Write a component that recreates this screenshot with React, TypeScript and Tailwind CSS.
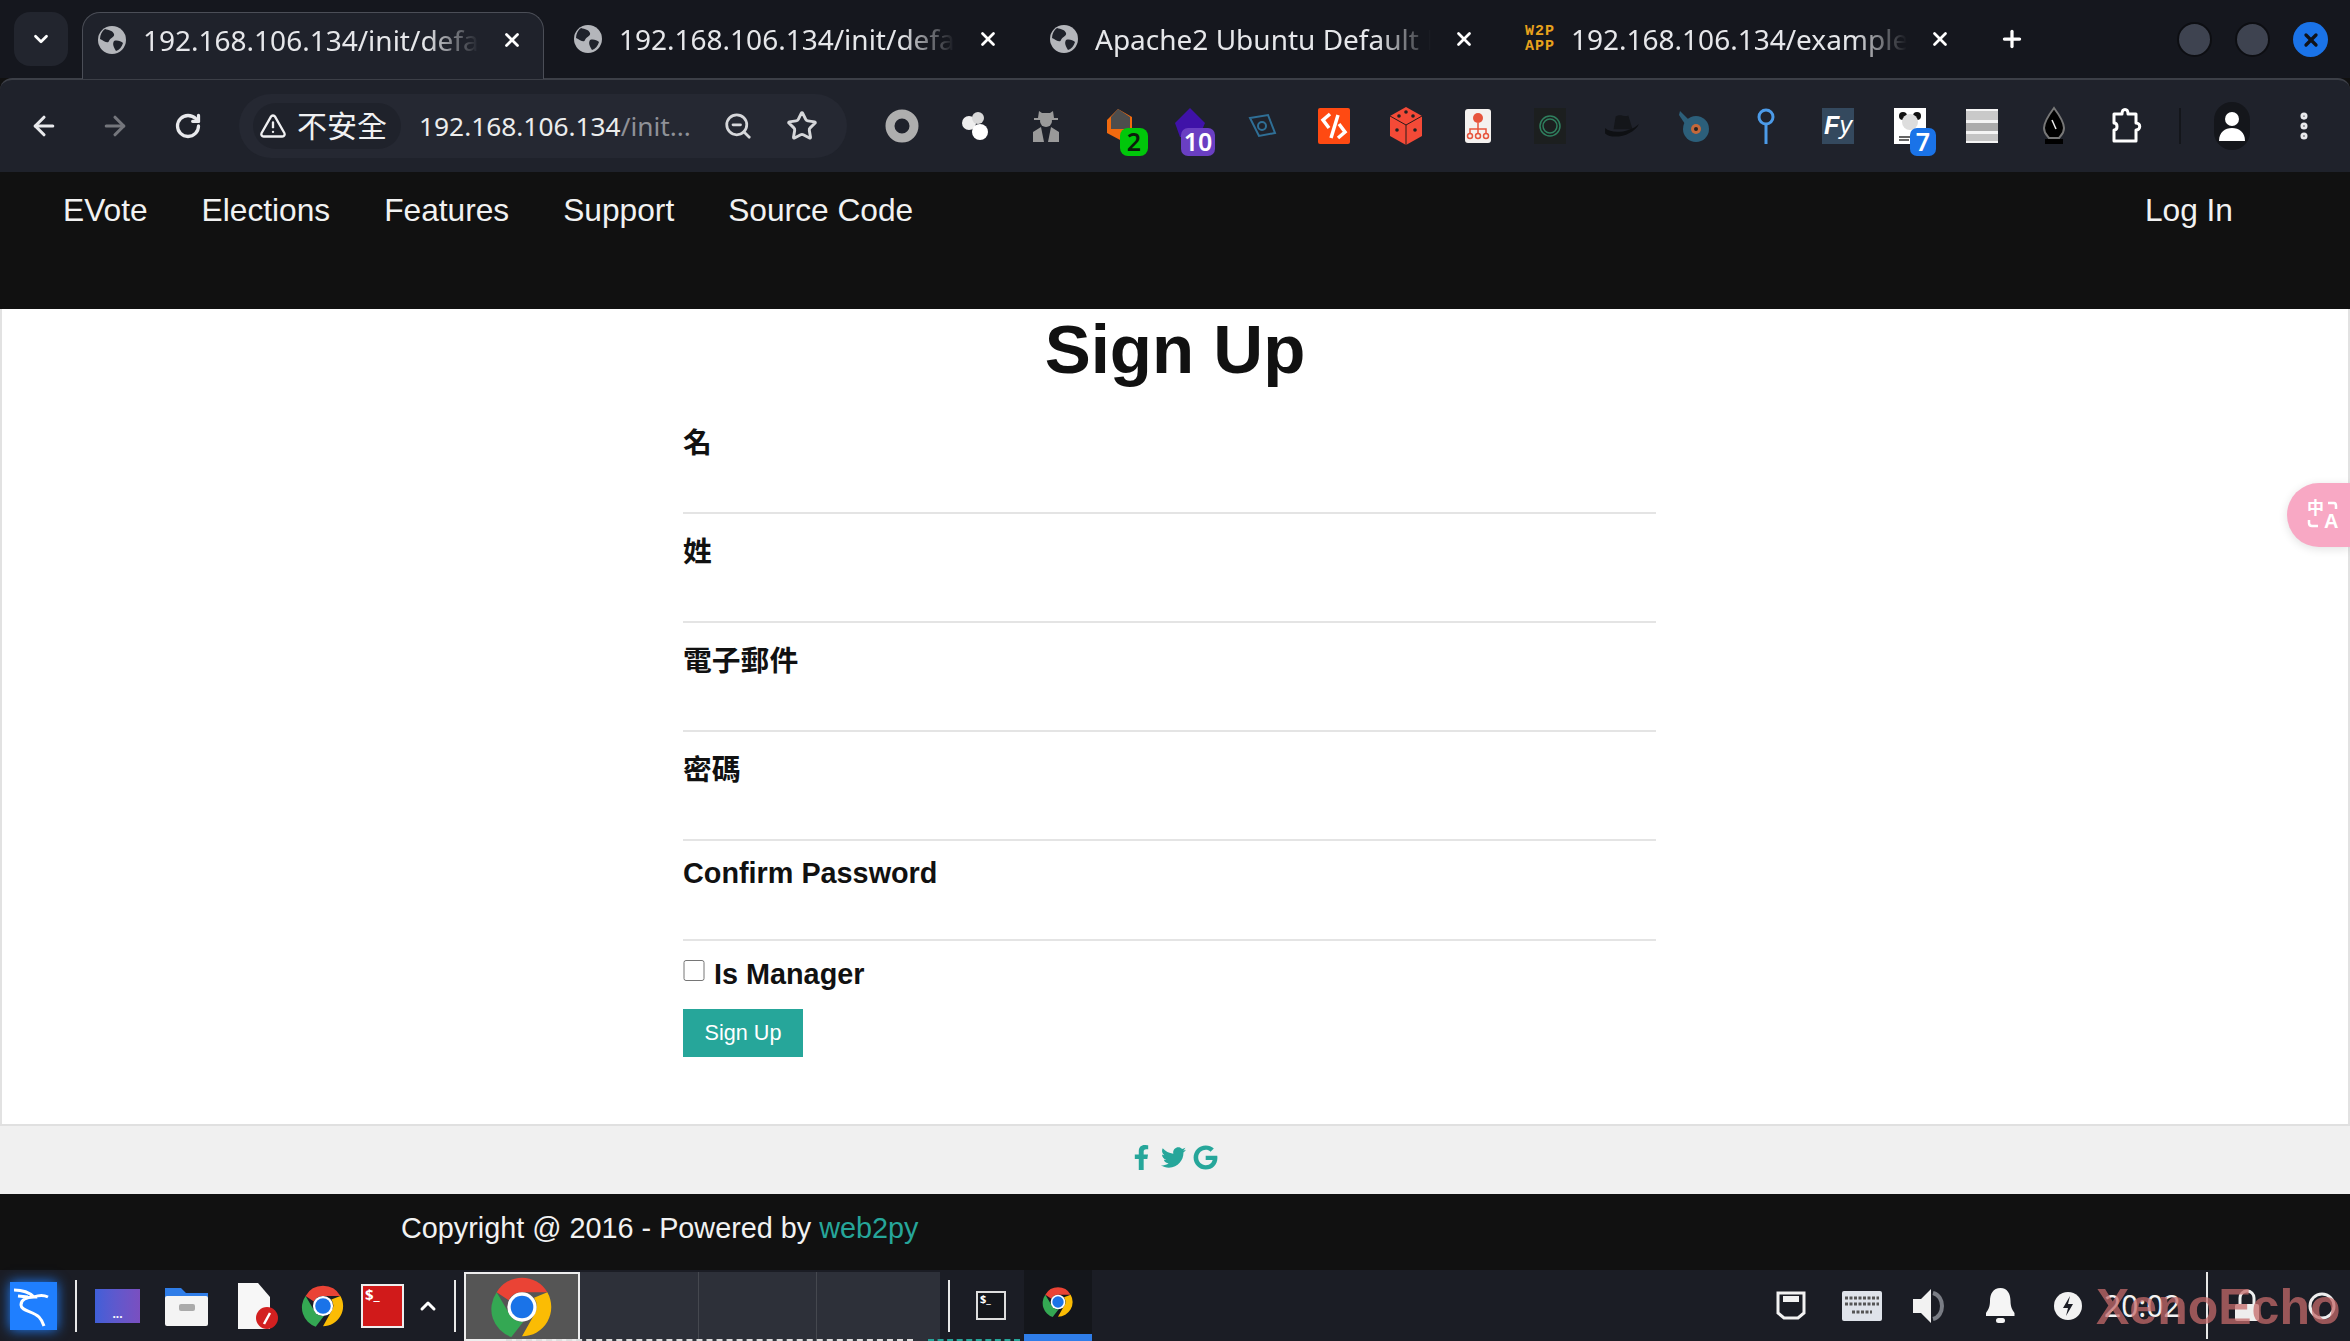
import type { ReactNode } from "react";
import {
  ArrowLeft,
  ArrowRight,
  ChevronDown,
  ChevronUp,
  EllipsisVertical,
  Plus,
  RotateCw,
  Star,
  TriangleAlert,
  X,
  ZoomOut,
} from "lucide-react";
import { FaFacebookF, FaGoogle, FaTwitter } from "react-icons/fa";

const uiFont = "font-['Noto_Sans','Noto_Sans_CJK_TC',sans-serif]";

const tabs = [
  { title: "192.168.106.134/init/default/user/register", icon: "globe" },
  { title: "192.168.106.134/init/default/index", icon: "globe" },
  { title: "Apache2 Ubuntu Default Page", icon: "globe" },
  { title: "192.168.106.134/examples/index", icon: "w2p" },
];

function GlobeIcon() {
  return (
    <svg width="30" height="30" viewBox="0 0 30 30">
      <circle cx="15" cy="15" r="14" fill="#b4b6bb" />
      <path d="M8 4c4 1 8 2 9 5s-4 4-5 7-5 0-9-2c0-4 2-8 5-10Z" fill="#1f222b" />
      <path d="M17 16c3-1 7 0 9 2-1 4-4 7-7 8-2-3-4-7-2-10Z" fill="#1f222b" />
    </svg>
  );
}

function W2pIcon() {
  return (
    <div className="w-[30px] font-['Liberation_Mono',monospace] text-[15px] leading-[15px] font-bold tracking-[1px] text-[#e8a21c]">
      <div>W2P</div>
      <div>APP</div>
    </div>
  );
}

function ChromeIcon({ size }: { size: number }) {
  return (
    <svg width={size} height={size} viewBox="0 0 48 48">
      <path d="M24 2a22 22 0 0 1 19 11H24a11 11 0 0 0-10 6L5 13A22 22 0 0 1 24 2Z" fill="#ea4335" />
      <path d="M5 13l10 17a11 11 0 0 0 10 5l-9 11.500A22 22 0 0 1 5 13Z" fill="#34a853" />
      <path d="M43 13a22 22 0 0 1-19 33l9-16a11 11 0 0 0 0-13l10-4Z" fill="#fbbc04" />
      <circle cx="24" cy="24" r="11" fill="#fff" />
      <circle cx="24" cy="24" r="8.500" fill="#1a73e8" />
    </svg>
  );
}

const extensions: ReactNode[] = [
  <svg key="ring" width="34" height="34" viewBox="0 0 34 34">
    <circle cx="17" cy="17" r="12" fill="none" stroke="#aeaeae" strokeWidth="9" />
  </svg>,
  <svg key="blobs" width="34" height="34" viewBox="0 0 34 34">
    <circle cx="12" cy="14" r="7" fill="#eee" />
    <circle cx="21" cy="9" r="6" fill="#d8d8d8" />
    <circle cx="23" cy="23" r="8" fill="#fff" />
  </svg>,
  <svg key="spy" width="30" height="36" viewBox="0 0 30 36">
    <path d="M8 3l3 2h8l3-2 1 7h4v2H3v-2h4Z" fill="#9a9a9a" />
    <circle cx="15" cy="13" r="6" fill="#9a9a9a" />
    <path d="M2 34V24l8-5 3 15Zm26 0V24l-8-5-3 15Z" fill="#9a9a9a" />
  </svg>,
  <div key="hex" className="relative flex h-[36px] w-[36px] items-center justify-center">
    <svg width="30" height="36" viewBox="0 0 30 36">
      <path d="M15 1l14 8v14l-10 10-15-8V12Z" fill="#f06a0f" />
      <path d="M15 1l12 8v12H8V9Z" fill="#4d4d4d" />
    </svg>
    <span className={`absolute top-[20px] left-[20px] flex h-[28px] w-[28px] items-center justify-center rounded-[8px] bg-[#00c70a] text-[25px] font-semibold text-[#0b1d0b] ${uiFont}`}>
      2
    </span>
  </div>,
  <div key="purple" className="relative flex h-[36px] w-[36px] items-center justify-center">
    <svg width="32" height="36" viewBox="0 0 32 36">
      <path d="M16 0l15 15-6 14H6L1 15Z" fill="#3f12a8" />
    </svg>
    <span className={`absolute top-[20px] left-[9px] flex h-[28px] w-[34px] items-center justify-center rounded-[7px] bg-[#6a3fc2] text-[25px] font-semibold text-white ${uiFont}`}>
      10
    </span>
  </div>,
  <svg key="eye" width="30" height="26" viewBox="0 0 30 26">
    <path d="M3 5l18-3 7 18-16 3Z" fill="none" stroke="#2f6f96" strokeWidth="2" />
    <circle cx="15" cy="13" r="4" fill="none" stroke="#2f6f96" strokeWidth="2" />
  </svg>,
  <svg key="code" width="32" height="36" viewBox="0 0 32 36">
    <rect width="32" height="36" rx="2" fill="#ff4a12" />
    <path d="M12 6l-7 6 6 8M20 7l-7 23M21 16l6 8-7 6" fill="none" stroke="#fff" strokeWidth="3.500" />
  </svg>,
  <svg key="die" width="32" height="38" viewBox="0 0 32 38">
    <path d="M16 0l16 9v20l-16 9L0 29V9Z" fill="#f44a37" />
    <path d="M0 9l16 9 16-9M16 18v20" fill="none" stroke="#2a1a1a" strokeWidth="1" />
    <circle cx="16" cy="5" r="1.800" fill="#222" />
    <circle cx="9" cy="9" r="1.800" fill="#222" />
    <circle cx="23" cy="9" r="1.800" fill="#222" />
    <circle cx="7" cy="23" r="1.800" fill="#222" />
    <circle cx="25" cy="23" r="1.800" fill="#222" />
  </svg>,
  <svg key="org" width="26" height="34" viewBox="0 0 26 34">
    <rect width="26" height="34" rx="3" fill="#f4f1ef" />
    <circle cx="13" cy="9" r="5" fill="#e7543c" />
    <path d="M13 14v6M5 25v-5h16v5M13 20v5" fill="none" stroke="#e7543c" strokeWidth="1.500" />
    <circle cx="5" cy="27" r="2.500" fill="none" stroke="#e7543c" strokeWidth="1.500" />
    <circle cx="13" cy="27" r="2.500" fill="none" stroke="#e7543c" strokeWidth="1.500" />
    <circle cx="21" cy="27" r="2.500" fill="none" stroke="#e7543c" strokeWidth="1.500" />
  </svg>,
  <svg key="rings" width="32" height="36" viewBox="0 0 32 36">
    <rect width="32" height="36" fill="#1c1f1f" />
    <circle cx="16" cy="18" r="10" fill="none" stroke="#2f7f5e" strokeWidth="1.500" />
    <circle cx="16" cy="18" r="7" fill="none" stroke="#2f7f5e" strokeWidth="1.500" />
  </svg>,
  <svg key="hat" width="38" height="30" viewBox="0 0 36 26">
    <path d="M10 16l2-12c5-3 8 1 12-1l4 13Z" fill="#14161a" />
    <path d="M2 15c6 6 24 4 32-4-4 10-24 16-32 9Z" fill="#0e1013" />
  </svg>,
  <svg key="pan" width="32" height="34" viewBox="0 0 32 34">
    <path d="M2 2l12 12-5 4L1 6Z" fill="#2c5f7a" />
    <circle cx="18" cy="20" r="13" fill="#2c5f7a" />
    <circle cx="18" cy="20" r="5" fill="#c4683a" />
    <circle cx="18" cy="20" r="2" fill="#222" />
  </svg>,
  <svg key="pin" width="18" height="38" viewBox="0 0 18 38">
    <circle cx="9" cy="10" r="7" fill="none" stroke="#4c9be8" strokeWidth="3" />
    <path d="M9 17v20" stroke="#4c9be8" strokeWidth="3" />
  </svg>,
  <div key="fy" className="flex h-[36px] w-[32px] items-center justify-center bg-[#34495e] font-['Liberation_Sans',sans-serif] text-[25px] text-white italic">
    <span className="font-bold">F</span>y
  </div>,
  <div key="panda" className="relative flex h-[36px] w-[32px] items-center justify-center">
    <svg width="32" height="36" viewBox="0 0 32 36">
      <rect width="32" height="36" fill="#fff" />
      <circle cx="9" cy="8" r="4" fill="#111" />
      <circle cx="23" cy="8" r="4" fill="#111" />
      <circle cx="16" cy="14" r="8" fill="#ddd" />
      <path d="M5 29h14M5 32h10" stroke="#333" strokeWidth="1.500" />
    </svg>
    <span className={`absolute top-[20px] left-[16px] flex h-[28px] w-[26px] items-center justify-center rounded-[7px] bg-[#1a73e8] text-[25px] font-semibold text-white ${uiFont}`}>
      7
    </span>
  </div>,
  <div key="stripes" className="flex h-[34px] w-[32px] flex-col bg-[#f4f4f4] py-[2px]">
    <div className="h-[9px] bg-[#c9c9c9]" />
    <div className="h-[3px]" />
    <div className="h-[8px] bg-[#ababab]" />
    <div className="h-[3px]" />
    <div className="h-[7px] bg-[#c4c4c4]" />
  </div>,
  <svg key="bishop" width="32" height="40" viewBox="0 0 32 40">
    <path d="M16 2c6 8 10 14 10 20 0 6-4 8-5 10H11c-1-2-5-4-5-10 0-6 4-12 10-20Z" fill="#000" stroke="#777" strokeWidth="2" />
    <path d="M14 14l4 9" stroke="#eee" strokeWidth="1.500" />
    <rect x="7" y="33" width="18" height="5" fill="#000" />
  </svg>,
  <svg key="puzzle" width="32" height="38" viewBox="0 0 32 38">
    <path
      d="M4 7h8c0-6 6-6 6 0h8v9c5 0 5 7 0 7v11H4V23c4 0 4-7 0-7Z"
      fill="none"
      stroke="#fff"
      strokeWidth="3"
      strokeLinejoin="round"
    />
  </svg>,
];

function TabStrip() {
  return (
    <div className={`flex h-[78px] bg-[#15171e] ${uiFont}`}>
      <div className="ml-[14px] mt-[12px] flex h-[54px] w-[54px] items-center justify-center rounded-[16px] bg-[#22252e] text-white">
        <ChevronDown size={22} strokeWidth={3} />
      </div>
      <div className="ml-[14px] flex">
        {tabs.map((tab, index) => (
          <div
            key={tab.title}
            className={
              index === 0
                ? "mt-[12px] flex h-[67px] w-[462px] items-center rounded-t-[18px] border border-b-0 border-[#4b4e57] bg-[#1f222b] pl-[14px] pb-[12px]"
                : "mt-[12px] flex h-[66px] w-[476px] items-center pl-[29px] pb-[12px]"
            }
          >
            <div className="flex w-[30px] shrink-0 justify-center">
              {tab.icon === "w2p" ? <W2pIcon /> : <GlobeIcon />}
            </div>
            <div className="ml-[16px] w-[336px] overflow-hidden text-[28px] leading-[36px] whitespace-nowrap text-[#e6e7ea] [mask-image:linear-gradient(to_right,#000_84%,transparent)]">
              {tab.title}
            </div>
            <X size={22} strokeWidth={3} className="ml-[22px] shrink-0 text-white" />
          </div>
        ))}
      </div>
      <Plus size={26} strokeWidth={3} className="mt-[26px] ml-[27px] text-white" />
      <div className="ml-auto mt-[22px] mr-[22px] flex gap-[23px]">
        <div className="h-[35px] w-[35px] rounded-full border-2 border-[#0d0e12] bg-[#3e4350]" />
        <div className="h-[35px] w-[35px] rounded-full border-2 border-[#0d0e12] bg-[#3e4350]" />
        <div className="flex h-[35px] w-[35px] items-center justify-center rounded-full bg-[#1a73e8] text-[#10131a]">
          <X size={20} strokeWidth={4} />
        </div>
      </div>
    </div>
  );
}

function Toolbar() {
  return (
    <div className={`flex h-[94px] items-center rounded-t-[12px] border-t-2 border-[#3c3f47] bg-[#1f222b] ${uiFont}`}>
      <ArrowLeft size={30} strokeWidth={2.500} className="ml-[29px] text-[#e8e9ec]" />
      <ArrowRight size={30} strokeWidth={2.500} className="ml-[41px] text-[#74767c]" />
      <RotateCw size={28} strokeWidth={2.800} className="ml-[44px] text-[#e8e9ec]" />
      <div className="ml-[37px] flex h-[64px] w-[608px] items-center rounded-full bg-[#252832]">
        <div className="ml-[14px] flex h-[46px] w-[148px] items-center rounded-full bg-[#1f222b] pl-[6px] text-[#f0f0f2]">
          <TriangleAlert size={28} strokeWidth={2} />
          <span className="ml-[10px] text-[30px] leading-[36px]">不安全</span>
        </div>
        <div className="ml-[18px] w-[278px] overflow-hidden text-[26.300px] leading-[36px] whitespace-nowrap text-[#eceded]">
          192.168.106.134<span className="text-[#8f9197]">/init...</span>
        </div>
        <ZoomOut size={30} strokeWidth={2.200} className="ml-[26px] text-[#d6d7da]" />
        <Star size={32} strokeWidth={2.200} className="ml-[33px] text-[#d6d7da]" />
      </div>
      <div className="ml-[19px] flex">
        {extensions.map((icon, index) => (
          <div key={index} className="flex h-[72px] w-[72px] items-center justify-center">
            {icon}
          </div>
        ))}
      </div>
      <div className="ml-[17px] h-[36px] w-[2px] bg-[#14161b]" />
      <div className="ml-[33px] flex h-[48px] w-[36px] items-center justify-center rounded-full bg-[#14161b]">
        <svg width="28" height="30" viewBox="0 0 28 30">
          <circle cx="14" cy="8" r="7" fill="#fff" />
          <path d="M1 30c0-9 6-13 13-13s13 4 13 13Z" fill="#fff" />
        </svg>
      </div>
      <EllipsisVertical size={34} strokeWidth={3} className="ml-[37px] text-[#e8e9ec]" />
    </div>
  );
}

function SiteNav() {
  const links = ["EVote", "Elections", "Features", "Support", "Source Code"];
  return (
    <nav className="flex h-[137px] items-start bg-[#111] pt-[18px] pr-[117px] pl-[63px] text-[31.700px] leading-[40px] text-[#f2f2f2]">
      <div className="flex gap-[54px]">
        {links.map((link) => (
          <a key={link}>{link}</a>
        ))}
      </div>
      <a className="ml-auto">Log In</a>
    </nav>
  );
}

const fields = [
  { label: "名", last: false },
  { label: "姓", last: false },
  { label: "電子郵件", last: false },
  { label: "密碼", last: false },
  { label: "Confirm Password", last: true },
];

function SignUpForm() {
  return (
    <main className="h-[815px] border-x-2 border-[#e2e2e2] bg-white text-[#111]">
      <h1 className="h-[83px] text-center text-[69px] leading-[81px] font-bold">Sign Up</h1>
      <form className="mt-[31px] ml-[681px] w-[973px]">
        {fields.map((field) => (
          <div key={field.label} className={field.last ? "mt-[-6px]" : "mb-[18px]"}>
            <label className="block h-[40px] text-[28.800px] leading-[40px] font-bold">{field.label}</label>
            <input
              className={`block w-full border-b-2 border-[#e4e4e4] outline-none ${field.last ? "h-[48px]" : "h-[51px]"}`}
            />
          </div>
        ))}
        <div className="mt-[13px] flex h-[40px] items-center">
          <input type="checkbox" className="mb-[7px] h-[21px] w-[22px]" />
          <label className="ml-[9px] text-[28.800px] leading-[40px] font-bold">Is Manager</label>
        </div>
        <button
          type="button"
          className="mt-[15px] h-[48px] w-[120px] bg-[#26a69a] text-[21.600px] text-white"
        >
          Sign Up
        </button>
      </form>
    </main>
  );
}

function PageFooter() {
  return (
    <>
      <div className="flex h-[70px] items-center justify-center border-t-2 border-[#e0e0e0] bg-[#f0f0f0] pr-[4px] pb-[5px] text-[25px] text-[#26a69a]">
        <FaFacebookF className="mr-[7px]" />
        <FaTwitter className="mr-[7px]" />
        <FaGoogle />
      </div>
      <div className="flex h-[76px] items-center bg-[#111] pb-[7px] pl-[401px] text-[28.800px] text-[#f2f2f2]">
        <span className="whitespace-pre">Copyright @ 2016 - Powered by </span>
        <a className="text-[#26a69a]">web2py</a>
      </div>
    </>
  );
}

function TaskSep({ className }: { className: string }) {
  return <div className={`h-[52px] w-[2px] shrink-0 bg-[#e8e8e8] ${className}`} />;
}

function Taskbar() {
  return (
    <div className={`relative flex h-[71px] items-center bg-[#1b1d25] ${uiFont}`}>
      {/* launcher */}
      <div className="ml-[10px] flex h-[48px] w-[47px] items-center justify-center bg-[#1f7fff] shadow-[0_0_12px_#1f7fff]">
        <svg width="44" height="44" viewBox="0 0 44 44">
          <path
            d="M2 6c8 0 16 3 20 7-8 0-13 3-13 8 0 6 12 6 18 12 3 3 4 6 5 9M6 12l10 1M22 13c5-2 10-2 14 0"
            fill="none"
            stroke="#fff"
            strokeWidth="3"
          />
        </svg>
      </div>
      <TaskSep className="ml-[18px]" />
      <div className="ml-[18px] flex h-[34px] w-[45px] items-end justify-center bg-gradient-to-r from-[#3f5fd8] to-[#7a4fc0] pb-[3px]">
        <span className="text-[12px] leading-[12px] font-bold text-white">...</span>
      </div>
      <svg className="ml-[25px]" width="43" height="40" viewBox="0 0 43 40">
        <path d="M0 2h16l5 5h22v8H0Z" fill="#2f7de8" />
        <rect y="10" width="43" height="30" rx="2" fill="#f4f4f4" />
        <rect x="14" y="18" width="16" height="7" rx="2" fill="#aaa" />
      </svg>
      <svg className="ml-[30px]" width="40" height="46" viewBox="0 0 40 46">
        <path d="M0 0h20l12 14v32H0Z" fill="#f7f7f7" />
        <circle cx="29" cy="35" r="11" fill="#d32020" />
        <path d="M26 41l6-11" stroke="#fff" strokeWidth="2.500" />
      </svg>
      <div className="ml-[23px]">
        <ChromeIcon size={44} />
      </div>
      <div className="ml-[16px] flex h-[44px] w-[43px] border-2 border-[#eee] bg-[#d11a1a] pl-[2px] text-[15px] leading-[16px] font-bold text-white">
        $_
      </div>
      <ChevronUp size={24} strokeWidth={3} className="ml-[12px] text-white" />
      <TaskSep className="ml-[14px]" />
      <div className="ml-[8px] flex h-[69px] w-[116px] items-center justify-center self-end border-2 border-[#eee] bg-[#555]">
        <ChromeIcon size={64} />
      </div>
      <div className="flex h-[69px] self-end bg-[#2d3039]">
        <div className="w-[119px] border-r border-[#45484f]" />
        <div className="w-[118px] border-r border-[#45484f]" />
        <div className="w-[123px]" />
      </div>
      <TaskSep className="ml-[8px]" />
      <div className="ml-[26px] flex h-[29px] w-[30px] border-2 border-[#ddd] bg-[#14161b] pl-[2px] text-[11px] leading-[12px] font-bold text-white">
        $_
      </div>
      <div className="ml-[18px] flex h-[71px] w-[68px] items-center justify-center border-b-[7px] border-[#2f7de8] bg-[#14161b]">
        <ChromeIcon size={32} />
      </div>
      {/* tray */}
      <svg className="ml-[684px]" width="30" height="30" viewBox="0 0 30 30">
        <path d="M2 2h26v20l-6 5H8l-6-5Z" fill="none" stroke="#f2f2f2" strokeWidth="3" />
        <path d="M7 5h16v6H7Z" fill="#f2f2f2" />
      </svg>
      <svg className="ml-[36px]" width="40" height="30" viewBox="0 0 40 30">
        <rect width="40" height="30" rx="2" fill="#dfe3ea" />
        <path d="M3 7h34M3 13h34M10 21h20" stroke="#555" strokeWidth="3" strokeDasharray="3 1.500" />
      </svg>
      <svg className="ml-[31px]" width="35" height="36" viewBox="0 0 35 36">
        <path d="M0 11h8L18 1v34L8 25H0Z" fill="#f2f2f2" />
        <path d="M20 5c12 3 12 23 0 26" fill="none" stroke="#7a7d85" strokeWidth="4" />
      </svg>
      <svg className="ml-[38px]" width="29" height="38" viewBox="0 0 29 38">
        <path d="M14.500 1c7 0 10 6 10 13 0 6 2 9 4 12v3H0v-3c2-3 4-6 4-12C4 7 7 1 14.500 1Z" fill="#f5f5f5" />
        <rect x="10" y="31" width="9" height="5" rx="2.500" fill="#f5f5f5" />
      </svg>
      <svg className="ml-[39px]" width="28" height="28" viewBox="0 0 28 28">
        <circle cx="14" cy="14" r="14" fill="#f2f2f2" />
        <path d="M16 4l-7 12h5l-2 8 7-12h-5Z" fill="#1b1d25" />
      </svg>
      <span className="ml-[22px] w-[73px] text-[30px] leading-[36px] text-[#f2f2f2]">20:02</span>
      <div className="ml-[29px] h-[67px] w-[2px] bg-[#e8e8e8]" />
      <svg className="ml-[27px]" width="24" height="34" viewBox="0 0 24 34">
        <path d="M5 15V9a7 7 0 0 1 14 0v6" fill="none" stroke="#eee" strokeWidth="3" />
        <rect y="15" width="24" height="17" rx="2" fill="#eee" />
      </svg>
      <svg className="ml-[49px]" width="28" height="28" viewBox="0 0 28 28">
        <circle cx="14" cy="14" r="12" fill="none" stroke="#eee" strokeWidth="3" />
      </svg>
      <span className="absolute top-[17px] left-[2096px] font-['Liberation_Sans',sans-serif] text-[50px] leading-[40px] font-bold text-[#c46a6a]/75">
        XenoEcho
      </span>
      {/* sliver of the window behind, peeking under the previews */}
      <div className="absolute bottom-0 left-[506px] w-[407px] border-t-[2px] border-dashed border-[#ddd]" />
      <div className="absolute bottom-0 left-[928px] w-[92px] border-t-[2px] border-dashed border-[#26a69a]" />
    </div>
  );
}

export default function App() {
  return (
    <div className="relative h-[1341px] w-[2350px] overflow-hidden bg-[#111] font-['Liberation_Sans','Noto_Sans_CJK_TC',sans-serif]">
      <TabStrip />
      <Toolbar />
      <SiteNav />
      <SignUpForm />
      <PageFooter />
      <Taskbar />
      {/* translate widget floats over the page */}
      <div className="absolute top-[483px] right-0 flex h-[64px] w-[63px] rounded-l-[32px] bg-[#f8a8c4] py-[17px] pl-[20px] font-bold text-white shadow-[0_2px_10px_rgba(0,0,0,0.12)]">
        <span className="self-start text-[17px] leading-[18px]">中</span>
        <span className="self-end text-[20px] leading-[18px]">A</span>
        <svg className="absolute inset-0" width="63" height="64" viewBox="0 0 63 64">
          <path d="M41 20h6q2 0 2 3v3M22 37v3q0 3 3 3h6" fill="none" stroke="#fff" strokeWidth="2.500" />
        </svg>
      </div>
    </div>
  );
}
